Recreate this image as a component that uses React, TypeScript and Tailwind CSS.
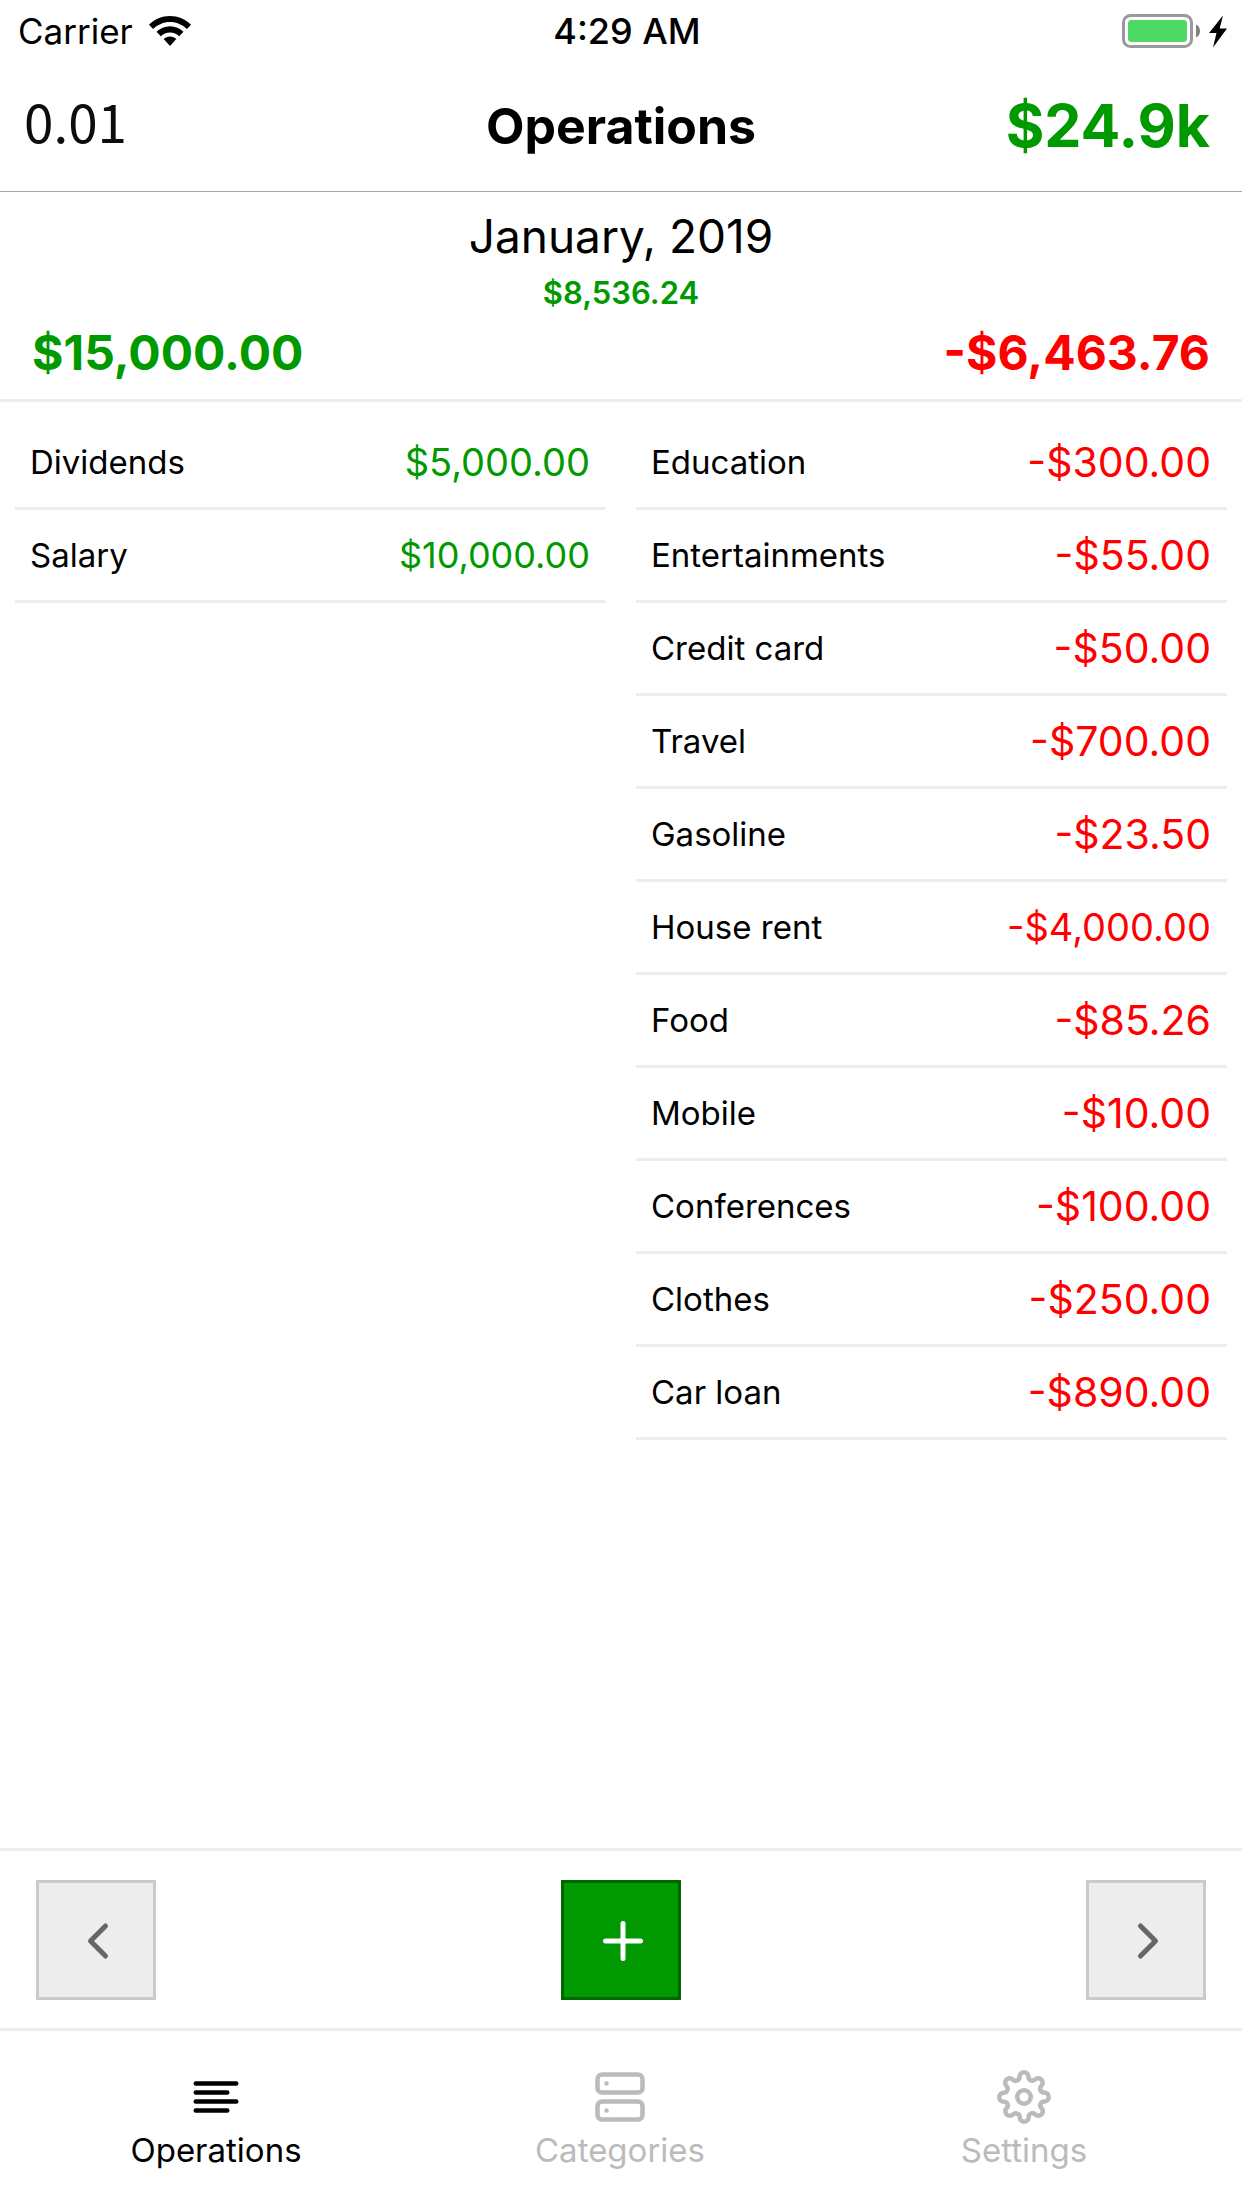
import { FiAlignLeft, FiChevronLeft, FiChevronRight, FiPlus, FiServer, FiSettings } from "react-icons/fi";

type Entry = { name: string; amount: string; size: string };

const income: Entry[] = [
  { name: "Dividends", amount: "$5,000.00", size: "text-[38px]" },
  { name: "Salary", amount: "$10,000.00", size: "text-[36px]" },
];

const expenses: Entry[] = [
  { name: "Education", amount: "-$300.00", size: "text-[41px]" },
  { name: "Entertainments", amount: "-$55.00", size: "text-[41px]" },
  { name: "Credit card", amount: "-$50.00", size: "text-[41px]" },
  { name: "Travel", amount: "-$700.00", size: "text-[41px]" },
  { name: "Gasoline", amount: "-$23.50", size: "text-[41px]" },
  { name: "House rent", amount: "-$4,000.00", size: "text-[38px]" },
  { name: "Food", amount: "-$85.26", size: "text-[41px]" },
  { name: "Mobile", amount: "-$10.00", size: "text-[41px]" },
  { name: "Conferences", amount: "-$100.00", size: "text-[41px]" },
  { name: "Clothes", amount: "-$250.00", size: "text-[41px]" },
  { name: "Car loan", amount: "-$890.00", size: "text-[41px]" },
];

function EntryTable({ label, entries, color }: { label: string; entries: Entry[]; color: string }) {
  return (
    <div className="flex-1 px-[15px]">
      <table aria-label={label} className="w-full border-separate border-spacing-0">
        <tbody>
          {entries.map((entry) => (
            <tr key={entry.name}>
              <th
                scope="row"
                className="h-[93px] border-b-3 border-[#ededed] pl-[15px] text-left text-[33px] leading-[48px] font-normal"
              >
                {entry.name}
              </th>
              <td className={`h-[93px] border-b-3 border-[#ededed] pr-4 text-right leading-[48px] ${entry.size} ${color}`}>
                {entry.amount}
              </td>
            </tr>
          ))}
        </tbody>
      </table>
    </div>
  );
}

function StatusBar() {
  return (
    <div className="grid h-[60px] grid-cols-3 items-center pt-0.5 pr-3.5 pl-[18px]">
      <div className="flex items-center gap-4">
        <span className="text-[35px] leading-[48px]">Carrier</span>
        <svg aria-label="Wi-Fi" width="42" height="31" viewBox="0 0 42 31" fill="#000">
          <path d="M21 0C13 0 5.600 3.200 0 8.700L4.100 13C8.500 8.700 14.500 6 21 6s12.500 2.700 16.900 7L42 8.700C36.400 3.200 29 0 21 0Z" />
          <path d="M21 10.200c-5.200 0-10 2.100-13.500 5.600l4.300 4.500c2.300-2.400 5.600-3.900 9.200-3.900s6.900 1.500 9.200 3.900l4.300-4.500C31 12.300 26.200 10.200 21 10.200Z" />
          <path d="M21 20.500c-2.500 0-4.700 1-6.300 2.600L21 30l6.300-6.900C25.700 21.500 23.500 20.500 21 20.500Z" />
        </svg>
      </div>
      <span className="pl-2 text-center text-[36px] leading-[48px] font-medium">4:29 AM</span>
      <div className="flex items-center justify-end">
        <svg aria-label="Battery charging" width="106" height="34" viewBox="0 0 106 34">
          <rect x="1.500" y="1.500" width="68" height="31" rx="7" fill="none" stroke="#999" strokeWidth="3" />
          <rect x="6" y="6" width="59" height="22" rx="3.500" fill="#4cd964" />
          <path d="M74 10.500c2.500 1.200 4 3.500 4 6.500s-1.500 5.300-4 6.500Z" fill="#808080" />
          <path d="M101 1.500 87 19h7.500L91 33.500 105 14.500h-7.300Z" fill="#000" />
        </svg>
      </div>
    </div>
  );
}

function Header() {
  return (
    <header className="grid h-[132px] grid-cols-3 items-center border-b border-[#a7a7a7] px-6">
      <span className="pb-3 font-['Noto_Sans_CJK_SC',sans-serif] text-[53px] leading-[60px] text-[#0d0d0d]">0.01</span>
      <h1 className="text-center text-[50px] leading-[60px] font-bold">Operations</h1>
      <span className="pr-2 text-right text-[59px] leading-[60px] font-bold text-[#009900]">$24.9k</span>
    </header>
  );
}

function MonthSummary() {
  return (
    <section className="flex flex-col border-b-3 border-[#ededed] px-8 pt-3.5 pb-[13px]">
      <h2 className="text-center text-[46px] leading-[60px] font-normal">January, 2019</h2>
      <p className="text-center text-[31px] leading-[54px] font-semibold text-[#009900]">$8,536.24</p>
      <div className="flex justify-between text-[48px] leading-[66px] font-bold">
        <span className="text-[#009900]">$15,000.00</span>
        <span className="text-[#ff0000]">-$6,463.76</span>
      </div>
    </section>
  );
}

const squareButton = "flex size-[120px] items-center justify-center border-3 pt-0.5 pl-1";
const tab = "flex flex-1 flex-col items-center gap-0.5";

export default function App() {
  return (
    <div className="flex min-h-screen flex-col bg-white font-['Inter',sans-serif] text-black">
      <StatusBar />
      <Header />
      <MonthSummary />
      <main className="flex flex-1 pt-[15px]">
        <EntryTable label="Income" entries={income} color="text-[#009900]" />
        <EntryTable label="Expenses" entries={expenses} color="text-[#ff0000]" />
      </main>
      <div className="flex h-[180px] items-center justify-between border-t-3 border-[#ededed] px-9">
        <button type="button" aria-label="Previous month" className={`${squareButton} border-[#cacaca] bg-[#ededed] text-[#666666]`}>
          <FiChevronLeft size={60} />
        </button>
        <button type="button" aria-label="Add operation" className={`${squareButton} border-[#006600] bg-[#009900] text-white`}>
          <FiPlus size={60} />
        </button>
        <button type="button" aria-label="Next month" className={`${squareButton} border-[#cacaca] bg-[#ededed] text-[#666666]`}>
          <FiChevronRight size={60} />
        </button>
      </div>
      <nav className="flex h-[180px] items-start border-t-3 border-[#ededed] pt-[39px] pr-4 pl-3.5 text-[33px] leading-[48px] text-[#bbbbbb]">
        <a href="#operations" aria-current="page" className={`${tab} text-black`}>
          <FiAlignLeft size={54} />
          Operations
        </a>
        <a href="#categories" className={tab}>
          <FiServer size={54} />
          Categories
        </a>
        <a href="#settings" className={tab}>
          <FiSettings size={54} />
          Settings
        </a>
      </nav>
    </div>
  );
}
